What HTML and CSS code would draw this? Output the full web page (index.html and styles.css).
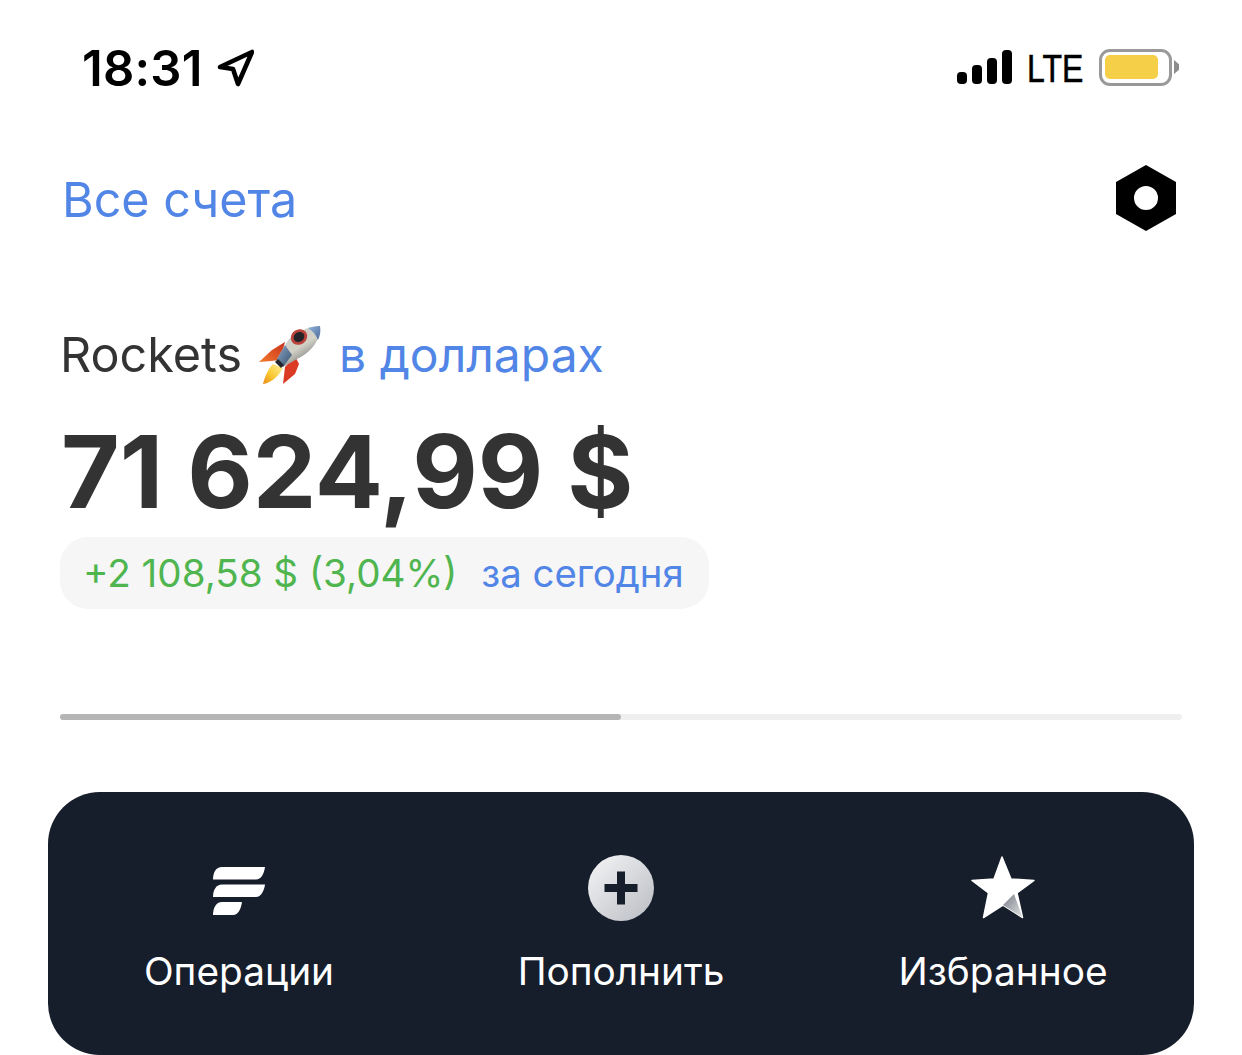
FILE: index.html
```html
<!DOCTYPE html>
<html>
<head>
  <title>Rockets</title>
  <link rel="stylesheet" href="styles.css">
</head>
<body>
  <div class="status">
    <div class="status-left">
      <span class="time">18:31</span>
      <svg class="arrow" width="38" height="38" viewBox="0 0 38 38">
        <path d="M4 18 L36 3 L22 35 L17 20 Z" fill="none" stroke="#000" stroke-width="4.6" stroke-linejoin="round"/>
      </svg>
    </div>
    <div class="status-right">
      <div class="signal">
        <span class="bar bar1"></span>
        <span class="bar bar2"></span>
        <span class="bar bar3"></span>
        <span class="bar bar4"></span>
      </div>
      <span class="lte">LTE</span>
      <div class="battery"><div class="battery-fill"></div></div>
      <div class="battery-cap"></div>
    </div>
  </div>

  <div class="top-row">
    <a class="accounts">Все счета</a>
    <svg class="nut" width="62" height="68" viewBox="0 0 62 68">
      <path fill-rule="evenodd" d="M31 1 L61 18 L61 50 L31 67 L1 50 L1 18 Z M31 22 A12 12 0 1 0 31 46 A12 12 0 1 0 31 22 Z"/>
    </svg>
  </div>

  <div class="portfolio">
    <span class="portfolio-name">Rockets</span>
    <svg class="rocket" width="70" height="66" viewBox="15 12 70 66">
      <defs>
        <linearGradient id="hull" x1="0.1" y1="0" x2="0.75" y2="1">
          <stop offset="0" stop-color="#c9ccd0"/>
          <stop offset="0.55" stop-color="#d3d2c6"/>
          <stop offset="1" stop-color="#5f6369"/>
        </linearGradient>
        <linearGradient id="nose" x1="0" y1="0" x2="1" y2="1">
          <stop offset="0" stop-color="#8fb4e0"/>
          <stop offset="1" stop-color="#4f6c96"/>
        </linearGradient>
        <linearGradient id="aft" x1="0" y1="0" x2="1" y2="1">
          <stop offset="0" stop-color="#8ea6c6"/>
          <stop offset="1" stop-color="#35506f"/>
        </linearGradient>
        <linearGradient id="flame" x1="1" y1="0" x2="0" y2="1">
          <stop offset="0" stop-color="#fff3a0"/>
          <stop offset="0.6" stop-color="#f8c62e"/>
          <stop offset="1" stop-color="#ee8a1c"/>
        </linearGradient>
        <linearGradient id="fin" x1="1" y1="0" x2="0" y2="1">
          <stop offset="0" stop-color="#c92f1e"/>
          <stop offset="1" stop-color="#f27a2a"/>
        </linearGradient>
      </defs>
      <path d="M19 53 L32 41 L45 33 L40 51 L31 52 Z" fill="url(#fin)"/>
      <path d="M43 75 L45 58 L55 47 L59 55 L55 65 Z" fill="#db3b24"/>
      <path d="M33 55 C28 60 25 67 23 75 C31 74 38 68 43 59 Z" fill="url(#flame)"/>
      <path d="M37 50 L47 33 C52 25 68 17 80 17 C81 28 74 42 57 50 L43 58 Z" fill="url(#hull)"/>
      <path d="M37 50 L45 36 L52 46 L43 58 Z" fill="url(#aft)"/>
      <path d="M35 53 L38 50 L44 56 L41 59 Z" fill="#23262c"/>
      <path d="M68 19 C72 18 76 17 80 17 C81 22 80 27 78 31 C76 26 73 22 68 19 Z" fill="url(#nose)"/>
      <ellipse cx="59" cy="28" rx="8.5" ry="7.5" transform="rotate(-35 59 28)" fill="#b9443c"/>
      <ellipse cx="59" cy="28" rx="5.6" ry="4.8" transform="rotate(-35 59 28)" fill="#23242a"/>
    </svg>
    <a class="currency">в долларах</a>
  </div>

  <div class="amount">71 624,99 $</div>

  <div class="change">
    <span class="change-green">+2 108,58 $ (3,04%)</span>
    <span class="change-period">за сегодня</span>
  </div>

  <div class="progress"><div class="progress-fill"></div></div>

  <div class="card">
    <div class="action">
      <svg class="action-icon" width="54" height="66" viewBox="0 0 54 66">
        <path d="M10 12 H53 C52 19 49 24.500 44 24.500 H1 C1 17 4 12 10 12 Z" fill="#fff"/>
        <path d="M10 29.500 H53 C52 36 49 42 44 42 H1 C1 35 4 29.500 10 29.500 Z" fill="#fff"/>
        <path d="M10 47 H30 C29 54 26 60 21 60 H1 C1 53 4 47 10 47 Z" fill="#fff"/>
      </svg>
      <span class="action-label">Операции</span>
    </div>
    <div class="action">
      <svg class="action-icon" width="66" height="66" viewBox="0 0 66 66">
        <defs>
          <linearGradient id="disc" x1="0" y1="0" x2="1" y2="1">
            <stop offset="0" stop-color="#f6f6f7"/>
            <stop offset="1" stop-color="#b9bcc2"/>
          </linearGradient>
        </defs>
        <circle cx="33" cy="33" r="33" fill="url(#disc)"/>
        <path d="M29 16.500 H37 V29 H49.500 V37 H37 V49.500 H29 V37 H16.500 V29 H29 Z" fill="#161d2b"/>
      </svg>
      <span class="action-label">Пополнить</span>
    </div>
    <div class="action">
      <svg class="action-icon" width="68" height="66" viewBox="0 0 68 66">
        <defs>
          <linearGradient id="tail" x1="0" y1="0" x2="1" y2="1">
            <stop offset="0" stop-color="#777b84"/>
            <stop offset="1" stop-color="#e2e3e5"/>
          </linearGradient>
        </defs>
        <path d="M33 2 L42 24 L65 25.500 L48 38 L53.500 62.500 L34 50 L14.500 62.500 L19.500 38 L3 25.500 L25 24 Z" fill="#fff" stroke="#fff" stroke-width="1.500" stroke-linejoin="round"/>
        <path d="M34 50 L45 39 L53.500 62.500 Z" fill="url(#tail)"/>
      </svg>
      <span class="action-label">Избранное</span>
    </div>
  </div>
</body>
</html>
```

FILE: styles.css
```css
html, body {
  height: 100%;
}

body {
  margin: 0;
  background-color: #ffffff;
  font-family: Inter, "Noto Sans", sans-serif;
  color: #333333;
  overflow: hidden;
}

.status {
  display: flex;
  justify-content: space-between;
  align-items: center;
  height: 68px;
  padding: 34px 63px 0 82px;
}

.status-left {
  display: flex;
  align-items: center;
  gap: 13px;
}

.time {
  font-size: 49px;
  font-weight: 600;
  color: #000000;
  letter-spacing: 0.2px;
}

.status-right {
  display: flex;
  align-items: center;
  margin-bottom: 2px;
}

.signal {
  display: flex;
  align-items: flex-end;
  gap: 5px;
  height: 34px;
}

.bar {
  width: 10px;
  background-color: #000000;
  border-radius: 4px;
}

.bar1 { height: 12px; }
.bar2 { height: 19px; }
.bar3 { height: 26px; }
.bar4 { height: 34px; }

.lte {
  font-family: "Liberation Sans", sans-serif;
  font-size: 39px;
  color: #000000;
  -webkit-text-stroke: 0.6px #000000;
  margin-top: 4px;
  margin-left: 15px;
  margin-right: 17px;
  transform: scaleX(0.82);
  transform-origin: left;
  width: 55px;
}

.battery {
  box-sizing: border-box;
  width: 73px;
  height: 37px;
  border: 3px solid #999999;
  border-radius: 11px;
  padding: 3px;
}

.battery-fill {
  width: 53px;
  height: 24px;
  background-color: #f6cf48;
  border-radius: 5px;
}

.battery-cap {
  width: 5px;
  height: 14px;
  margin-left: 2px;
  background-color: #8c8c8c;
  clip-path: polygon(0 0, 100% 30%, 100% 70%, 0 100%);
}

.top-row {
  display: flex;
  justify-content: space-between;
  align-items: center;
  padding: 62px 65px 0 62px;
}

.accounts {
  margin-top: 2px;
  font-size: 48.400px;
  color: #5185e6;
}

.portfolio {
  display: flex;
  align-items: center;
  padding: 89px 0 0 60px;
  font-size: 48.500px;
}

.portfolio-name {
  color: #333333;
}

.rocket {
  margin-left: 13px;
  margin-right: 14px;
}

.currency {
  font-size: 48px;
  color: #5185e6;
}

.amount {
  margin: 29px 0 0 61px;
  font-size: 101px;
  font-weight: 700;
  line-height: 110px;
  color: #333333;
}

.change {
  display: inline-flex;
  gap: 24px;
  align-items: center;
  box-sizing: border-box;
  width: 649px;
  height: 72px;
  margin: 11px 0 0 60px;
  padding-left: 23px;
  background-color: #f6f6f6;
  border-radius: 28px;
  font-size: 38.600px;
  white-space: nowrap;
}

.change-green {
  color: #4fb54f;
}

.change-period {
  font-size: 38.300px;
  color: #5185e6;
}

.progress {
  height: 6px;
  margin: 105px 60px 0 60px;
  background-color: #efefef;
  border-radius: 3px;
}

.progress-fill {
  width: 50%;
  height: 100%;
  background-color: #b5b5b5;
  border-radius: 3px;
}

.card {
  display: grid;
  grid-template-columns: repeat(3, 1fr);
  height: 263px;
  margin: 72px 48px 0 48px;
  background-color: #161d2b;
  border-radius: 52px;
}

.action {
  display: flex;
  flex-direction: column;
  align-items: center;
}

.action-icon {
  margin-top: 63px;
}

.action-label {
  margin-top: 26px;
  font-size: 38.800px;
  color: #ffffff;
}
```
